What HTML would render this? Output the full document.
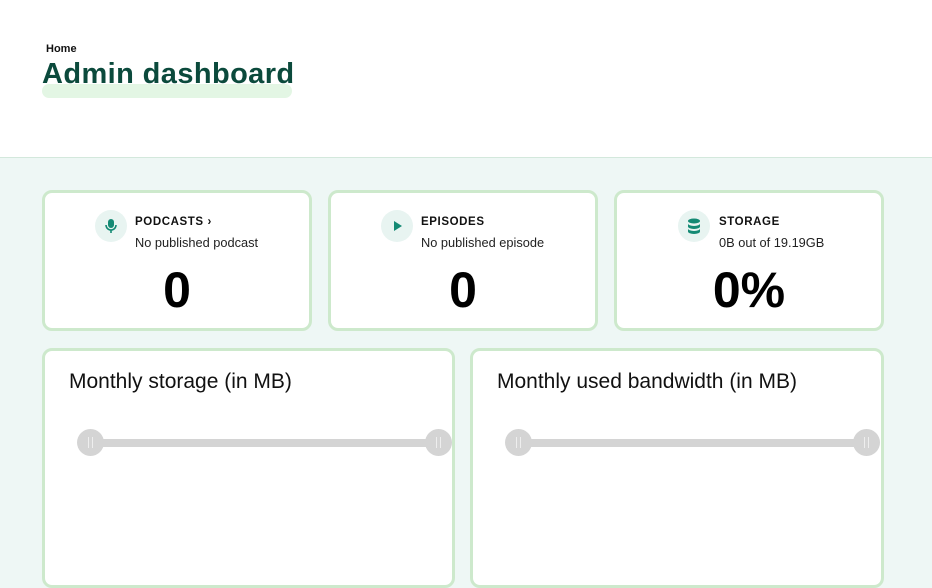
<!DOCTYPE html>
<html><head><style>
*{margin:0;padding:0;box-sizing:border-box}
body{width:932px;height:574px;overflow:hidden;background:#eef7f5;font-family:"Liberation Sans",sans-serif;position:relative}
.hdr{position:absolute;left:0;top:0;width:932px;height:158px;background:#fff;border-bottom:1px solid #d3e8dc}
.crumb{position:absolute;left:46px;top:43px;font-size:11px;font-weight:bold;color:#111}
.title{position:absolute;left:42px;top:58px;font-size:29px;font-weight:bold;color:#0b4a3c;letter-spacing:0.4px;z-index:2}
.hl{position:absolute;left:42px;top:84px;width:250px;height:14px;background:#e3f6e4;border-radius:7px}
.card{position:absolute;background:#fff;border:3px solid #cde9cc;border-radius:10px}
.ic{position:absolute;width:32px;height:32px;border-radius:50%;background:#e8f4f1}
.lab{position:absolute;font-size:11.5px;font-weight:bold;letter-spacing:0.6px;color:#111}
.sub{position:absolute;font-size:12.8px;color:#222}
.num{position:absolute;font-size:50px;font-weight:bold;color:#000;width:100%;text-align:center;top:68px}
.ct{position:absolute;left:24px;top:19px;font-size:21px;color:#111}
.track{position:absolute;height:8px;background:#d4d4d4;top:88px}
.hd{position:absolute;width:27px;height:27px;border-radius:50%;background:#d4d4d4;top:78px}
.hd::after{content:"";position:absolute;left:11px;top:8px;width:3px;height:11px;border-left:1px solid #eee;border-right:1px solid #eee}
</style></head><body>
<div class="hdr"><div class="crumb">Home</div><div class="hl"></div><div class="title">Admin dashboard</div></div>

<div class="card" style="left:42px;top:190px;width:270px;height:141px">
<div class="ic" style="left:50px;top:17px"><svg width="32" height="32"><rect x="13" y="9" width="6" height="9" rx="3" fill="#148a74"/><path d="M11 15a5 5 0 0 0 10 0M16 20v3" stroke="#148a74" stroke-width="1.6" fill="none"/></svg></div>
<div class="lab" style="left:90px;top:23px">PODCASTS ›</div>
<div class="sub" style="left:90px;top:42px">No published podcast</div>
<div class="num">0</div></div>

<div class="card" style="left:328px;top:190px;width:270px;height:141px">
<div class="ic" style="left:50px;top:17px"><svg width="32" height="32"><path d="M13 11l8 5-8 5z" fill="#148a74"/></svg></div>
<div class="lab" style="left:90px;top:23px">EPISODES</div>
<div class="sub" style="left:90px;top:42px">No published episode</div>
<div class="num">0</div></div>

<div class="card" style="left:614px;top:190px;width:270px;height:141px">
<div class="ic" style="left:61px;top:17px"><svg width="32" height="32"><ellipse cx="16" cy="11" rx="6" ry="2.5" fill="#148a74"/><path d="M10 13.5a6 2.5 0 0 0 12 0v3a6 2.5 0 0 1-12 0z M10 18.5a6 2.5 0 0 0 12 0v3a6 2.5 0 0 1-12 0z" fill="#148a74"/></svg></div>
<div class="lab" style="left:102px;top:23px">STORAGE</div>
<div class="sub" style="left:102px;top:42px">0B out of 19.19GB</div>
<div class="num">0%</div></div>

<div class="card" style="left:42px;top:348px;width:413px;height:240px">
<div class="ct">Monthly storage (in MB)</div>
<div class="track" style="left:46px;width:348px"></div>
<div class="hd" style="left:32px"></div><div class="hd" style="left:380px"></div></div>

<div class="card" style="left:470px;top:348px;width:414px;height:240px">
<div class="ct">Monthly used bandwidth (in MB)</div>
<div class="track" style="left:46px;width:348px"></div>
<div class="hd" style="left:32px"></div><div class="hd" style="left:380px"></div></div>
</body></html>
